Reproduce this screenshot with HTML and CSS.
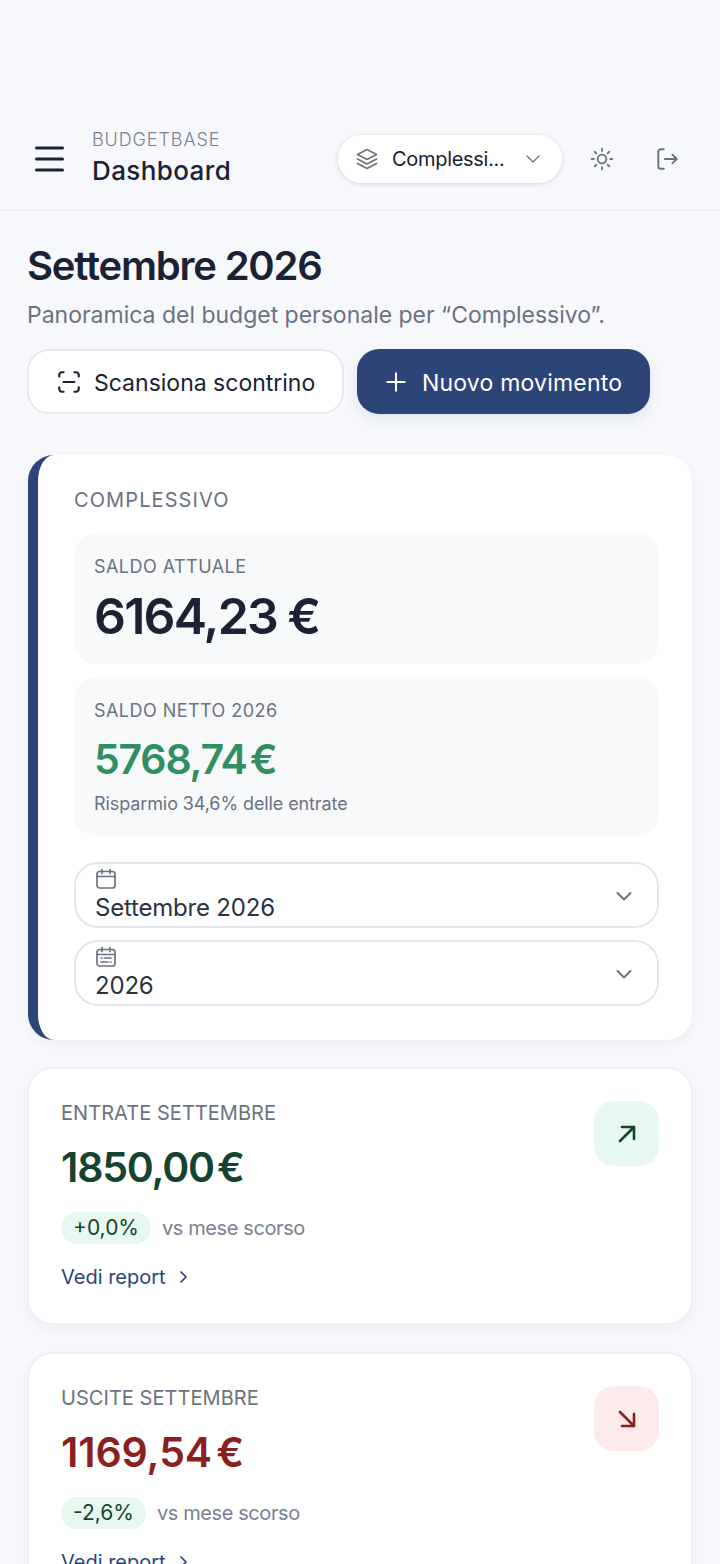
FILE: index.html
```html
<!DOCTYPE html>
<html lang="it">
<head>
<meta charset="utf-8">
<title>BudgetBase</title>
<link rel="stylesheet" href="styles.css">
</head>
<body>
<header class="topbar">
  <button class="icon-btn menu" aria-label="Menu">
    <svg width="32" height="32" viewBox="0 0 32 32" fill="none" stroke="#1a2233" stroke-width="3" stroke-linecap="round"><path d="M3.500 5h26M3.500 16h26M3.500 27h26"/></svg>
  </button>
  <div class="brand">
    <div class="brand-name">BUDGETBASE</div>
    <div class="brand-page">Dashboard</div>
  </div>
  <button class="scope">
    <svg class="scope-icon" width="24" height="24" viewBox="0 0 24 24" fill="none" stroke="#6b7280" stroke-width="1.700" stroke-linejoin="round" stroke-linecap="round"><path d="M12 2.500 2.500 7.500 12 12.500l9.500-5z"/><path d="M2.500 12 12 17l9.500-5"/><path d="M2.500 16.500 12 21.500l9.500-5"/></svg>
    <span class="scope-label">Complessi...</span>
    <svg class="scope-chev" width="16" height="16" viewBox="0 0 16 16" fill="none" stroke="#6b7280" stroke-width="1.400" stroke-linecap="round" stroke-linejoin="round"><path d="m2 5 6 6 6-6"/></svg>
  </button>
  <button class="icon-btn sun" aria-label="Tema">
    <svg width="26" height="26" viewBox="0 0 24 24" fill="none" stroke="#6b7280" stroke-width="1.700" stroke-linecap="round"><circle cx="12" cy="12" r="4"/><path d="M12 2.500v2M12 19.500v2M2.500 12h2M19.500 12h2M5.300 5.300l1.400 1.400M17.300 17.300l1.400 1.400M5.300 18.700l1.400-1.400M17.300 6.700l1.400-1.400"/></svg>
  </button>
  <button class="icon-btn logout" aria-label="Esci">
    <svg width="26" height="26" viewBox="0 0 24 24" fill="none" stroke="#6b7280" stroke-width="1.800" stroke-linecap="round" stroke-linejoin="round"><path d="M9 3H6a2 2 0 0 0-2 2v14a2 2 0 0 0 2 2h3"/><path d="M10 12h11M17 8l4 4-4 4"/></svg>
  </button>
</header>

<main class="content">
  <h1 class="title">Settembre 2026</h1>
  <p class="subtitle">Panoramica del budget personale per “Complessivo”.</p>
  <div class="actions">
    <button class="btn btn-light">
      <svg width="26" height="26" viewBox="0 0 24 24" fill="none" stroke="#1a2233" stroke-width="2" stroke-linecap="round" stroke-linejoin="round"><path d="M3 7V5.500A2.500 2.500 0 0 1 5.500 3H7M17 3h1.500A2.500 2.500 0 0 1 21 5.500V7M21 17v1.500a2.500 2.500 0 0 1-2.500 2.500H17M7 21H5.500A2.500 2.500 0 0 1 3 18.500V17M7 12h10"/></svg>
      <span class="btn-text">Scansiona scontrino</span>
    </button>
    <button class="btn btn-primary">
      <svg width="26" height="26" viewBox="0 0 24 24" fill="none" stroke="#fff" stroke-width="1.900" stroke-linecap="round"><path d="M12 4v16M4 12h16"/></svg>
      <span class="btn-text">Nuovo movimento</span>
    </button>
  </div>

  <section class="card overview">
    <div class="overline">COMPLESSIVO</div>
    <div class="panel panel-a">
      <div class="panel-label">SALDO ATTUALE</div>
      <div class="big">6164,23 €</div>
    </div>
    <div class="panel panel-b">
      <div class="panel-label">SALDO NETTO 2026</div>
      <div class="mid">5768,74 €</div>
      <div class="note">Risparmio 34,6% delle entrate</div>
    </div>
    <div class="select">
      <div class="select-body">
        <svg width="22" height="22" viewBox="0 0 22 22" fill="none" stroke="#6b7280" stroke-width="1.700" stroke-linecap="round" stroke-linejoin="round"><rect x="2" y="3.500" width="18" height="16.500" rx="2.500"/><path d="M2 8.500h18M7 1.500v4M15 1.500v4"/></svg>
        <span>Settembre 2026</span>
      </div>
      <svg class="chev" width="18" height="18" viewBox="0 0 18 18" fill="none" stroke="#6b7280" stroke-width="2" stroke-linecap="round" stroke-linejoin="round"><path d="m2.500 6 6.500 6.500L15.500 6"/></svg>
    </div>
    <div class="select">
      <div class="select-body">
        <svg width="22" height="22" viewBox="0 0 22 22" fill="none" stroke="#6b7280" stroke-width="1.700" stroke-linecap="round" stroke-linejoin="round"><rect x="2" y="3.500" width="18" height="16.500" rx="2.500"/><path d="M2 8.500h18M7 1.500v4M15 1.500v4M6 12h1M9.500 12H16M6 16h7M15.500 16h.5"/></svg>
        <span>2026</span>
      </div>
      <svg class="chev" width="18" height="18" viewBox="0 0 18 18" fill="none" stroke="#6b7280" stroke-width="2" stroke-linecap="round" stroke-linejoin="round"><path d="m2.500 6 6.500 6.500L15.500 6"/></svg>
    </div>
  </section>

  <section class="card stat">
    <div class="stat-icon up">
      <svg width="24" height="24" viewBox="0 0 24 24" fill="none" stroke="#14432f" stroke-width="2.600" stroke-linecap="round" stroke-linejoin="round"><path d="M5 19 19 5M7 5h12v12"/></svg>
    </div>
    <div class="overline stat-label">ENTRATE SETTEMBRE</div>
    <div class="mid income">1850,00 €</div>
    <div class="trend"><span class="chip">+0,0%</span><span class="versus">vs mese scorso</span></div>
    <a class="link" href="#">Vedi report
      <svg width="14" height="14" viewBox="0 0 14 14" fill="none" stroke="#2c4478" stroke-width="1.700" stroke-linecap="round" stroke-linejoin="round"><path d="m5 2 5 5-5 5"/></svg>
    </a>
  </section>

  <section class="card stat">
    <div class="stat-icon down">
      <svg width="24" height="24" viewBox="0 0 24 24" fill="none" stroke="#8a1f1f" stroke-width="2.600" stroke-linecap="round" stroke-linejoin="round"><path d="M5 5l14 14M19 7v12H7"/></svg>
    </div>
    <div class="overline stat-label">USCITE SETTEMBRE</div>
    <div class="mid expense">1169,54 €</div>
    <div class="trend"><span class="chip">-2,6%</span><span class="versus">vs mese scorso</span></div>
    <a class="link" href="#">Vedi report
      <svg width="14" height="14" viewBox="0 0 14 14" fill="none" stroke="#2c4478" stroke-width="1.700" stroke-linecap="round" stroke-linejoin="round"><path d="m5 2 5 5-5 5"/></svg>
    </a>
  </section>
</main>
</body>
</html>
```
FILE: styles.css
```css
* { box-sizing: border-box; }
html, body { margin: 0; padding: 0; height: 1564px; overflow: hidden; }
body {
  background: #f7f8fc;
  color: #1a2233;
  font-family: "Inter", "Liberation Sans", sans-serif;
}
button { font: inherit; color: inherit; background: none; border: 0; padding: 0; }
.topbar {
  height: 211px;
  padding: 108px 0 0 33px;
  display: flex;
  align-items: center;
  border-bottom: 2px solid #eceef3;
}
.icon-btn { display: flex; align-items: center; justify-content: center; }
.menu { width: 32px; height: 32px; margin-right: 27px; }
.brand { width: 246px; }
.brand-name { font-size: 18px; line-height: 24px; margin-bottom: 1px; color: #7a8090; letter-spacing: .9px; font-weight: 300; }
.brand-page { font-size: 26px; line-height: 36px; font-weight: 500; letter-spacing: .4px; }
.scope {
  width: 224px; height: 48px;
  border-radius: 24px;
  background: #fff;
  box-shadow: 0 1px 5px rgba(30,40,70,.16);
  display: flex; align-items: center;
  padding: 0 21px 0 17px;
}
.scope-label { font-size: 20px; margin-left: 13px; flex: 1; text-align: left; white-space: nowrap; letter-spacing: -.3px; }
.sun { margin-left: 27px; width: 26px; height: 26px; }
.logout { margin-left: 39px; width: 26px; height: 26px; }
.content { padding: 32px 27px 0; }
.title { margin: 0; font-size: 40px; line-height: 46px; font-weight: 600; letter-spacing: -1.200px; }
.subtitle { margin: 11px 0 0; font-size: 23px; line-height: 30px; color: #6b7280; letter-spacing: -.01px; font-weight: 400; }
.actions { display: flex; gap: 13px; margin-top: 19px; }
.btn {
  height: 65px; border-radius: 22px;
  display: flex; align-items: center;
  font-size: 23px; font-weight: 400;
}
.btn-text { margin-top: 2px; }
.btn-light { width: 317px; background: #fff; border: 2px solid #e7e9ef; padding-left: 27px; gap: 12px; letter-spacing: 0; }
.btn-primary { width: 293px; background: #2c4478; color: #fff; padding-left: 26px; gap: 13px; letter-spacing: .2px; box-shadow: 0 6px 14px rgba(44,68,120,.1); }
.card {
  background: #fff;
  border: 2px solid #eef0f5;
  border-radius: 26px;
  box-shadow: 0 4px 10px rgba(30,40,70,.05);
}
.overview {
  margin: 41px 0 0 1px;
  width: 664px;
  height: 585px;
  border: 0;
  border-left: 10px solid #2c4478;
  padding: 32px 33px 0 36px;
}
.overline { font-size: 20px; line-height: 26px; color: #6b7280; letter-spacing: 1.100px; font-weight: 400; }
.panel { background: #f8f9fb; border-radius: 22px; padding: 22px 20px 0; }
.panel-a { height: 131px; margin-top: 20px; }
.panel-b { height: 159px; margin-top: 13px; }
.panel-label { font-size: 18px; line-height: 24px; color: #6b7280; letter-spacing: .45px; }
.big { font-size: 50px; line-height: 56px; font-weight: 600; margin-top: 9px; letter-spacing: -1.800px; word-spacing: -.500px; }
.mid { font-size: 41px; line-height: 46px; font-weight: 600; letter-spacing: -1.200px; word-spacing: -6px; }
.panel-b .mid { color: #2f8f63; margin-top: 13px; }
.note { font-size: 18px; line-height: 24px; color: #6b7280; margin-top: 10px; letter-spacing: -.1px; }
.select {
  height: 66px;
  margin-top: 12px;
  border: 2px solid #e4e6ec;
  border-radius: 24px;
  padding: 2px 24px 0 19px;
  display: flex; justify-content: space-between; align-items: center;
}
.panel-b + .select { margin-top: 26px; }
.select-body { display: flex; flex-direction: column; align-items: flex-start; gap: 2px; }
.select-body span { font-size: 24px; line-height: 32px; color: #2b3240; letter-spacing: -.2px; }
.stat { position: relative; margin-top: 27px; width: 666px; height: 258px; padding: 31px 32px 0 32px; }
.stat-icon {
  position: absolute; top: 32px; right: 32px;
  width: 65px; height: 65px; border-radius: 20px;
  display: flex; align-items: center; justify-content: center;
}
.up { background: #e6f8ef; }
.down { background: #fdeaea; }
.stat-label { line-height: 26px; letter-spacing: .05px; }
.income { color: #14432f; margin-top: 18px; }
.expense { color: #8a1f1f; margin-top: 18px; letter-spacing: -.1px; }
.trend { display: flex; align-items: center; gap: 11px; margin-top: 22px; }
.chip { height: 32px; border-radius: 16px; background: #e6f8ef; color: #14432f; padding: 0 12px; font-size: 21px; line-height: 32px; }
.versus { font-size: 20px; color: #7a8090; letter-spacing: -.4px; }
.link { display: flex; align-items: center; gap: 10px; margin-top: 19px; color: #2c4478; font-size: 20px; line-height: 28px; text-decoration: none; letter-spacing: 0; font-weight: 400; }
```
